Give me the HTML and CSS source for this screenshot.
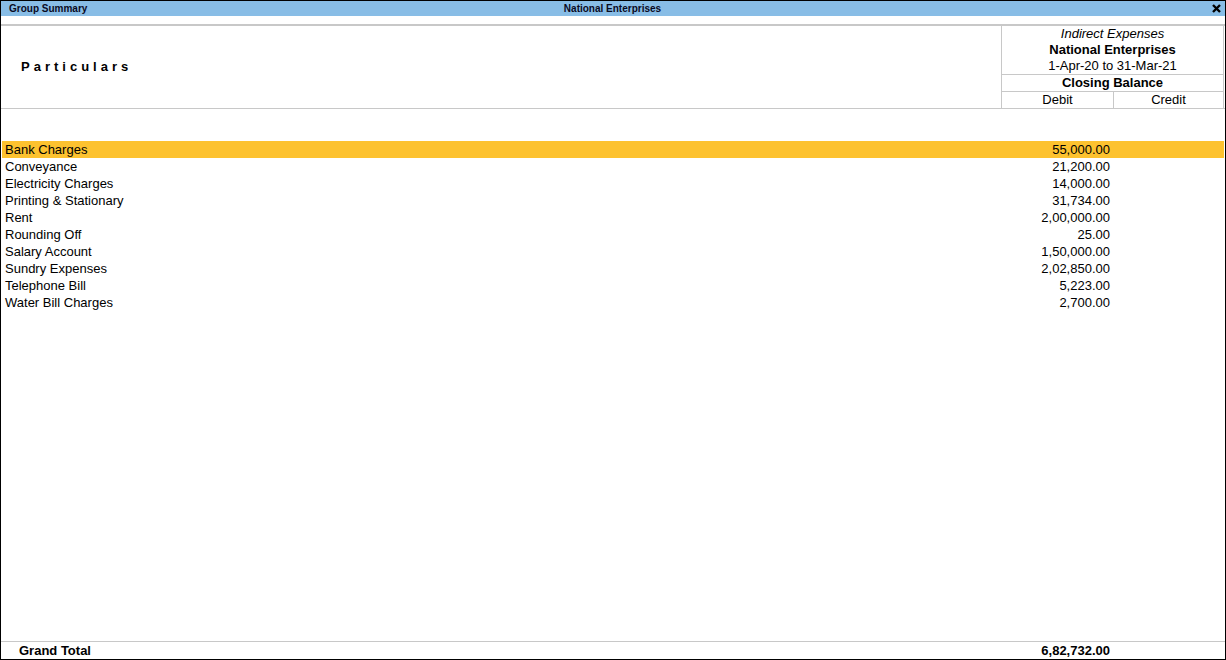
FILE: index.html
```html
<!DOCTYPE html>
<html lang="en">
<head>
    <meta charset="UTF-8"/>
    <title>Group Summary</title>
    <link rel="stylesheet" href="styles.css">
</head>
<body>
<div class="window">
    <div class="title-bar">
        <span class="title-left">Group Summary</span>
        <span class="title-center">National Enterprises</span>
        <span class="title-close">
            <svg width="9" height="9" viewBox="0 0 9 9">
                <path d="M1 1 L8 8 M8 1 L1 8" stroke="#000" stroke-width="2.4" fill="none"/>
            </svg>
        </span>
    </div>
    <div class="title-gap"></div>

    <!--表头-->
    <div class="report-header">
        <div class="particulars-head">Particulars</div>
        <div class="period-head">
            <div class="period-info">
                <div class="group-name">Indirect Expenses</div>
                <div class="company-name">National Enterprises</div>
                <div>1-Apr-20 to 31-Mar-21</div>
            </div>
            <div class="closing-head">Closing Balance</div>
            <div class="dr-cr-head">
                <div class="dr-col">Debit</div>
                <div class="cr-col">Credit</div>
            </div>
        </div>
    </div>

    <!--明细-->
    <div class="report-body">
        <div class="row row-selected">
            <div class="name-col">Bank Charges</div>
            <div class="amt-col">55,000.00</div>
            <div class="amt-col cr"></div>
        </div>
        <div class="row">
            <div class="name-col">Conveyance</div>
            <div class="amt-col">21,200.00</div>
            <div class="amt-col cr"></div>
        </div>
        <div class="row">
            <div class="name-col">Electricity Charges</div>
            <div class="amt-col">14,000.00</div>
            <div class="amt-col cr"></div>
        </div>
        <div class="row">
            <div class="name-col">Printing &amp; Stationary</div>
            <div class="amt-col">31,734.00</div>
            <div class="amt-col cr"></div>
        </div>
        <div class="row">
            <div class="name-col">Rent</div>
            <div class="amt-col">2,00,000.00</div>
            <div class="amt-col cr"></div>
        </div>
        <div class="row">
            <div class="name-col">Rounding Off</div>
            <div class="amt-col">25.00</div>
            <div class="amt-col cr"></div>
        </div>
        <div class="row">
            <div class="name-col">Salary Account</div>
            <div class="amt-col">1,50,000.00</div>
            <div class="amt-col cr"></div>
        </div>
        <div class="row">
            <div class="name-col">Sundry Expenses</div>
            <div class="amt-col">2,02,850.00</div>
            <div class="amt-col cr"></div>
        </div>
        <div class="row">
            <div class="name-col">Telephone Bill</div>
            <div class="amt-col">5,223.00</div>
            <div class="amt-col cr"></div>
        </div>
        <div class="row">
            <div class="name-col">Water Bill Charges</div>
            <div class="amt-col">2,700.00</div>
            <div class="amt-col cr"></div>
        </div>
    </div>

    <!--合计-->
    <div class="report-footer">
        <div class="name-col total-name">Grand Total</div>
        <div class="amt-col">6,82,732.00</div>
        <div class="amt-col cr"></div>
    </div>
</div>
</body>
</html>
```

FILE: styles.css
```css
* {
    margin: 0;
    padding: 0;
    box-sizing: border-box;
}

body {
    font-family: "Liberation Sans", Arial, sans-serif;
    font-size: 13px;
    color: #000;
    background-color: #fff;
}

.window {
    width: 1226px;
    height: 660px;
    border: 1px solid #000;
    display: flex;
    flex-direction: column;
}

.title-bar {
    height: 15px;
    background-color: #88bde6;
    display: flex;
    align-items: center;
    font-size: 10px;
    font-weight: bold;
    color: #0a0a1e;
    padding: 0 3px 0 8px;
}

.title-left {
    width: 300px;
}

.title-center {
    flex: 1;
    text-align: center;
    padding-right: 296px;
}

.title-close {
    width: 10px;
    height: 9px;
    display: flex;
}

.title-gap {
    height: 8px;
}

.report-header {
    display: flex;
    border-top: 2px solid #c8c8c8;
    border-bottom: 1px solid #c8c8c8;
    height: 85px;
}

.particulars-head {
    flex: 1;
    display: flex;
    align-items: center;
    padding-left: 20px;
    padding-bottom: 1px;
    font-weight: bold;
    letter-spacing: 4px;
}

.period-head {
    width: 223px;
    margin-right: 1px;
    border-left: 1px solid #c8c8c8;
    border-right: 1px solid #c8c8c8;
    text-align: center;
    line-height: 16px;
}

.period-info {
    border-bottom: 1px solid #c8c8c8;
}

.group-name {
    font-style: italic;
}

.company-name {
    font-weight: bold;
}

.closing-head {
    font-weight: bold;
    border-bottom: 1px solid #c8c8c8;
}

.dr-cr-head {
    display: flex;
}

.dr-col {
    width: 112px;
    border-right: 1px solid #c8c8c8;
}

.cr-col {
    flex: 1;
}

.report-body {
    flex: 1;
    padding-top: 32px;
}

.row {
    display: flex;
    height: 17px;
    line-height: 17px;
    margin-left: 1px;
    margin-right: 1px;
}

.row-selected {
    background-color: #fdc22f;
}

.name-col {
    flex: 1;
    padding-left: 3px;
}

.amt-col {
    width: 112px;
    text-align: right;
    padding-right: 4px;
}

.amt-col.cr {
    width: 110px;
}

.report-footer {
    display: flex;
    border-top: 1px solid #c8c8c8;
    height: 18px;
    line-height: 18px;
    font-weight: bold;
    padding-right: 1px;
}

.total-name {
    padding-left: 18px;
}
```
